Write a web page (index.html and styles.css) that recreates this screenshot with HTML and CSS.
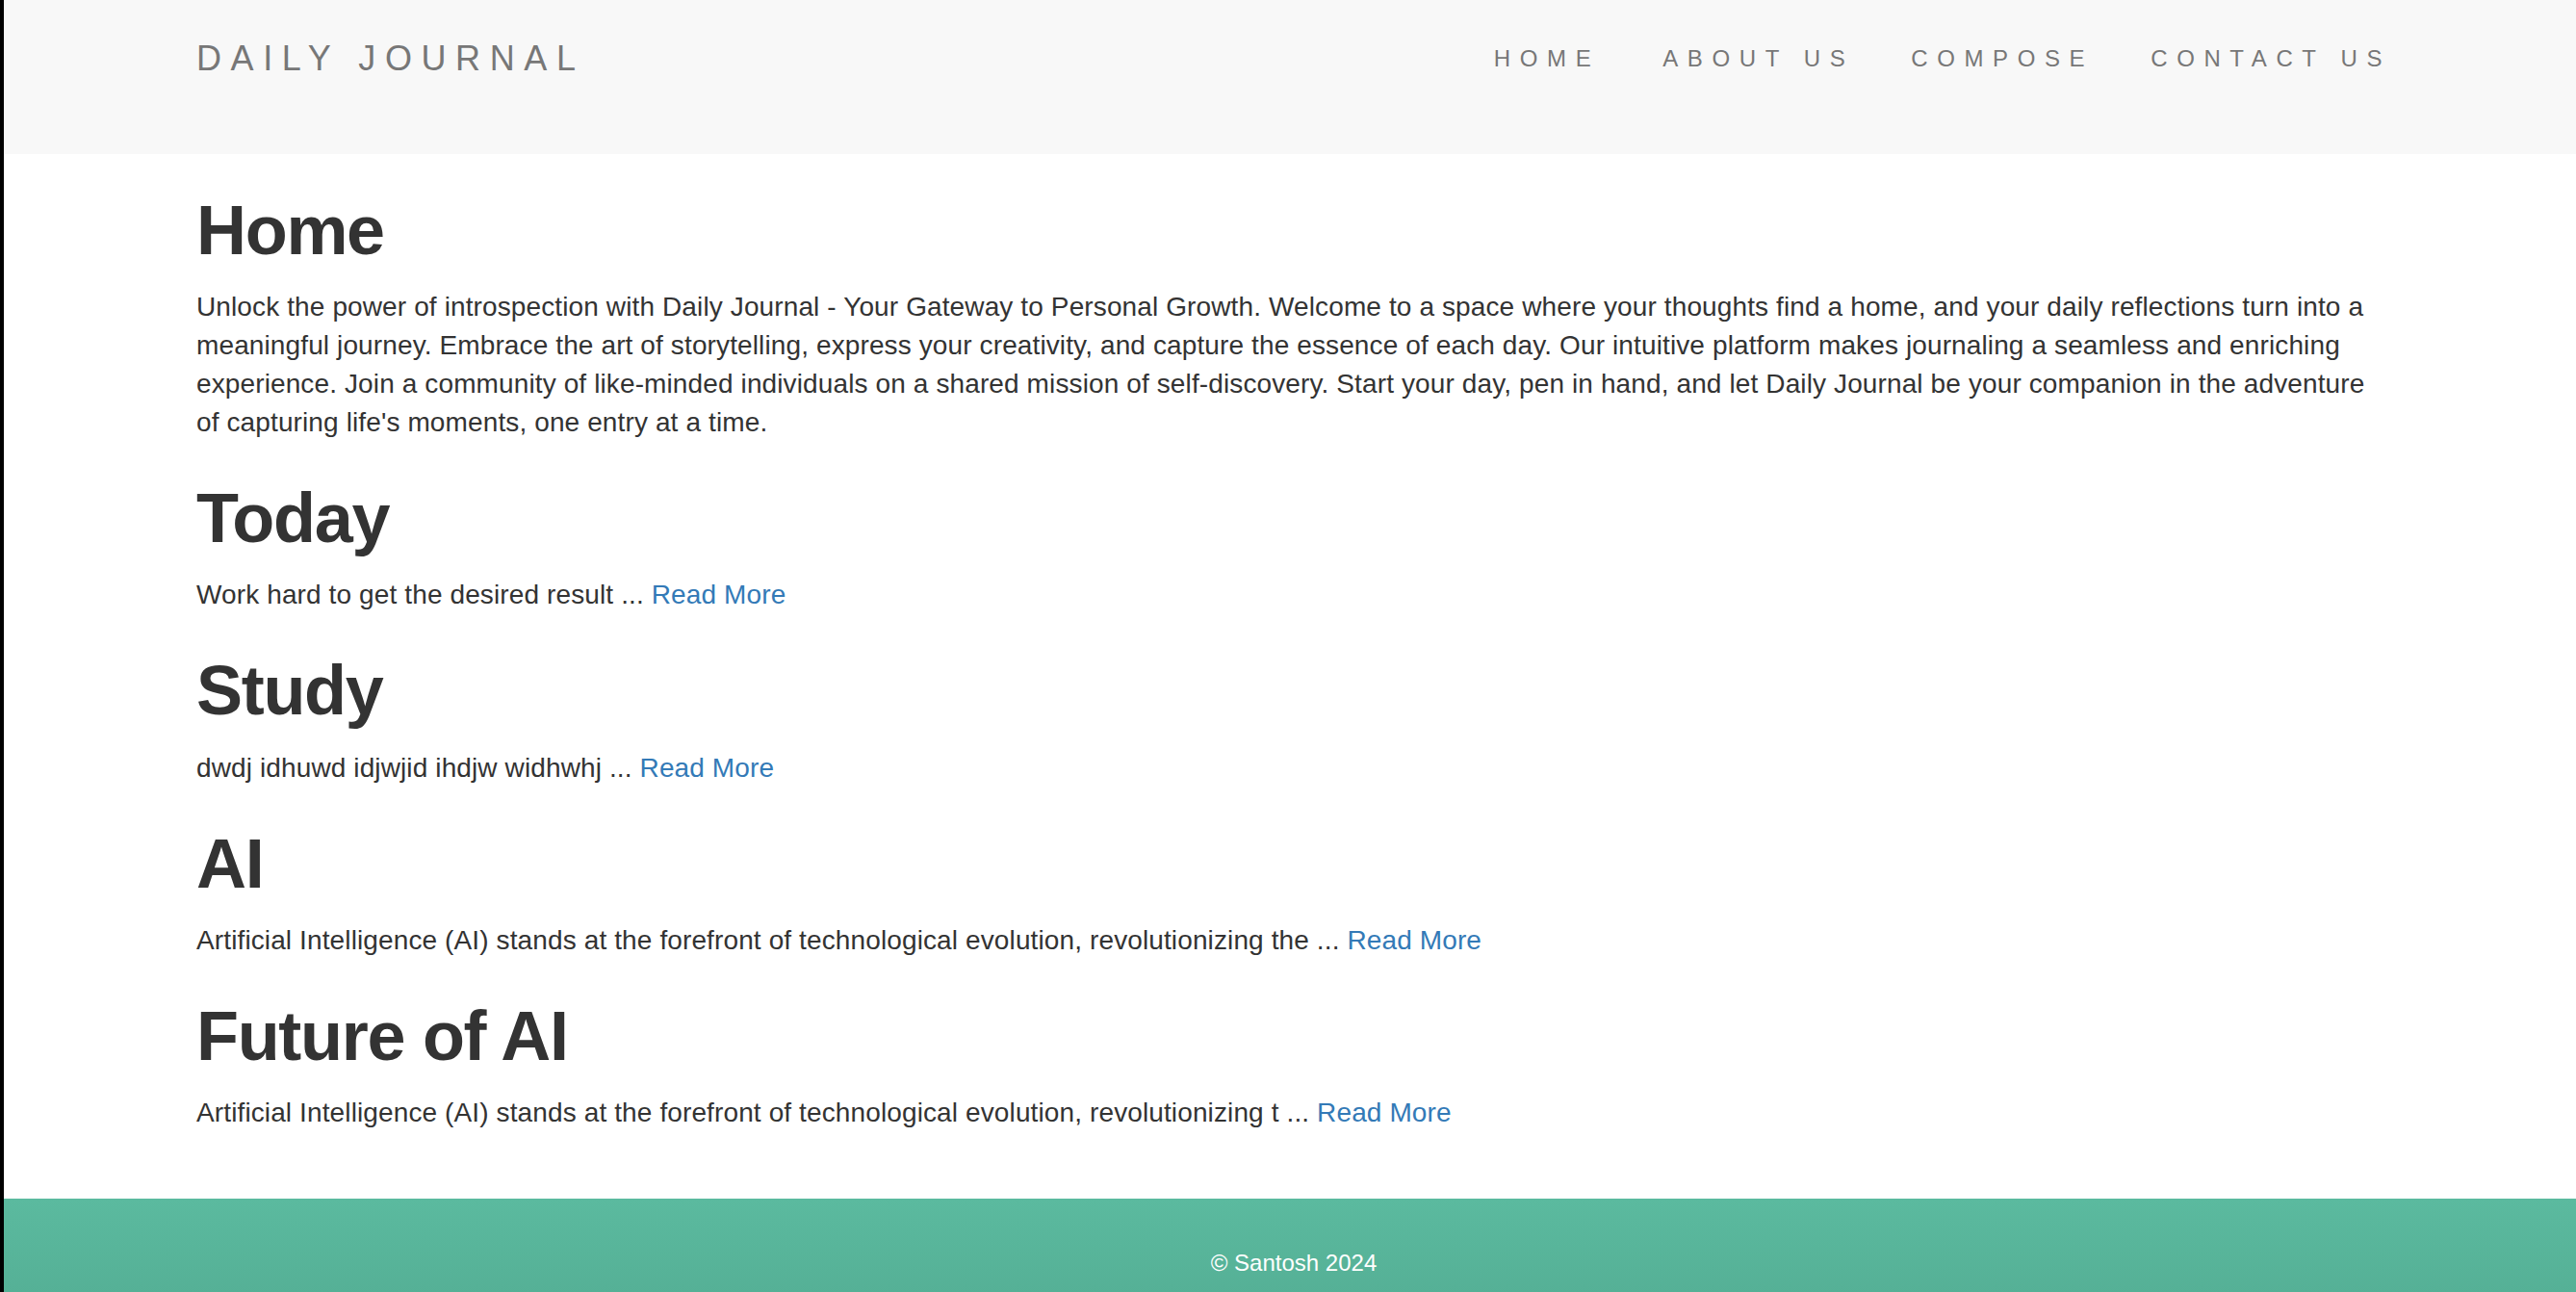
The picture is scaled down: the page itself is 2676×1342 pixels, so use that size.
FILE: index.html
```html
<!DOCTYPE html>
<html lang="en">
<head>
<meta charset="utf-8">
<title>Daily Journal</title>
<link rel="stylesheet" href="styles.css">
</head>
<body>
<div class="page">
  <nav class="navbar">
    <div class="container navbar-inner">
      <a class="navbar-brand" href="#">DAILY JOURNAL</a>
      <ul class="nav">
        <li><a href="#">HOME</a></li>
        <li><a href="#">ABOUT US</a></li>
        <li><a href="#">COMPOSE</a></li>
        <li><a href="#">CONTACT US</a></li>
      </ul>
    </div>
  </nav>

  <main class="container content">
    <h1>Home</h1>
    <p>Unlock the power of introspection with Daily Journal - Your Gateway to Personal Growth. Welcome to a space where your thoughts find a home, and your daily reflections turn into a meaningful journey. Embrace the art of storytelling, express your creativity, and capture the essence of each day. Our intuitive platform makes journaling a seamless and enriching experience. Join a community of like-minded individuals on a shared mission of self-discovery. Start your day, pen in hand, and let Daily Journal be your companion in the adventure of capturing life's moments, one entry at a time.</p>

    <h1>Today</h1>
    <p>Work hard to get the desired result ... <a href="#">Read More</a></p>

    <h1>Study</h1>
    <p>dwdj idhuwd idjwjid ihdjw widhwhj ... <a href="#">Read More</a></p>

    <h1>AI</h1>
    <p>Artificial Intelligence (AI) stands at the forefront of technological evolution, revolutionizing the ... <a href="#">Read More</a></p>

    <h1>Future of AI</h1>
    <p>Artificial Intelligence (AI) stands at the forefront of technological evolution, revolutionizing t ... <a href="#">Read More</a></p>
  </main>

  <footer class="footer">
    <div class="container">
      <p class="copyright">© Santosh 2024</p>
    </div>
  </footer>
</div>
</body>
</html>
```

FILE: styles.css
```css
html, body {
  margin: 0;
  padding: 0;
  height: 100%;
  overflow: hidden;
  background: #000;
}

.page {
  margin-left: 4px;
  min-height: 100%;
  background: #fff;
  font-family: "Helvetica Neue", Helvetica, "Liberation Sans", Arial, sans-serif;
  font-size: 28px;
  line-height: 40px;
  color: #333;
  padding-left: 8px;
  box-sizing: border-box;
  display: flex;
  flex-direction: column;
}

.container {
  width: 2280px;
  margin: 0 auto;
}

/* Navbar */
.navbar {
  background: #f8f8f8;
  height: 160px;
  box-sizing: border-box;
  padding-top: 11px;
  margin-left: -8px;
  padding-left: 8px;
}

.navbar-inner {
  display: flex;
  justify-content: space-between;
  align-items: flex-start;
}

.navbar-brand {
  display: block;
  padding: 30px 0;
  font-size: 36px;
  line-height: 40px;
  letter-spacing: 9.6px;
  color: #777;
  text-decoration: none;
}

.nav {
  display: flex;
  list-style: none;
  margin: 0 -29px 0 0;
  padding: 0;
}

.nav a {
  display: block;
  padding: 30px 29px 30px 30px;
  font-size: 24px;
  line-height: 40px;
  letter-spacing: 9.6px;
  color: #777;
  text-decoration: none;
}

.nav li:first-child a {
  padding-right: 35px;
}

/* Content */
.content h1 {
  font-size: 72px;
  line-height: 1.1;
  font-weight: 700;
  letter-spacing: -1.3px;
  margin: 40px 0 20px;
  color: #333;
}

.content p {
  margin: 0 0 20px;
  letter-spacing: 0.12px;
}

.content a {
  color: #337ab7;
  text-decoration: none;
}

/* Footer */
.footer {
  margin-top: 49px;
  margin-left: -8px;
  padding-left: 8px;
  height: 120px;
  flex-shrink: 0;
  background: linear-gradient(#5bba9f, #54ae94);
  text-align: center;
}

.copyright {
  margin: 50px 0 0;
  font-size: 24px;
  line-height: 34px;
  color: #fff;
}
```
